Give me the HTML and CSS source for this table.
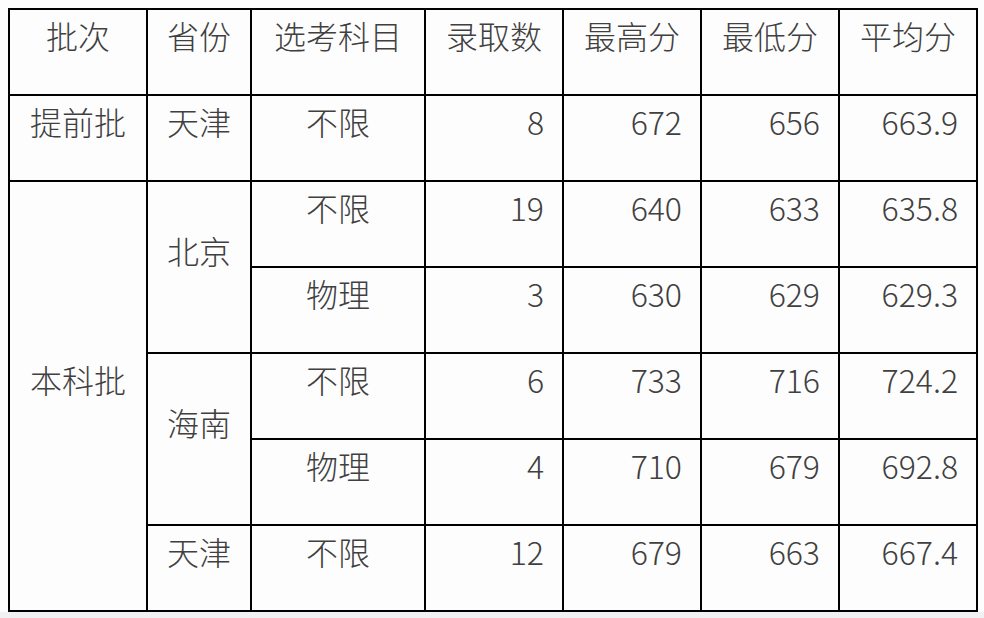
FILE: index.html
```html
<!DOCTYPE html>
<html lang="zh-CN">
<head>
<meta charset="utf-8">
<title>录取分数</title>
<link rel="stylesheet" href="styles.css">
</head>
<body>
<div class="page">
  <table class="score-table">
    <colgroup>
      <col class="c-batch">
      <col class="c-prov">
      <col class="c-subj">
      <col class="c-num">
      <col class="c-num">
      <col class="c-num">
      <col class="c-num">
    </colgroup>
    <thead>
      <tr>
        <th>批次</th>
        <th>省份</th>
        <th>选考科目</th>
        <th>录取数</th>
        <th>最高分</th>
        <th>最低分</th>
        <th>平均分</th>
      </tr>
    </thead>
    <tbody>
      <tr>
        <td class="ctr">提前批</td>
        <td class="ctr">天津</td>
        <td class="ctr">不限</td>
        <td class="num">8</td>
        <td class="num">672</td>
        <td class="num">656</td>
        <td class="num">663.9</td>
      </tr>
      <tr>
        <td class="ctr" rowspan="5">本科批</td>
        <td class="ctr" rowspan="2">北京</td>
        <td class="ctr">不限</td>
        <td class="num">19</td>
        <td class="num">640</td>
        <td class="num">633</td>
        <td class="num">635.8</td>
      </tr>
      <tr>
        <td class="ctr">物理</td>
        <td class="num">3</td>
        <td class="num">630</td>
        <td class="num">629</td>
        <td class="num">629.3</td>
      </tr>
      <tr>
        <td class="ctr" rowspan="2">海南</td>
        <td class="ctr">不限</td>
        <td class="num">6</td>
        <td class="num">733</td>
        <td class="num">716</td>
        <td class="num">724.2</td>
      </tr>
      <tr>
        <td class="ctr">物理</td>
        <td class="num">4</td>
        <td class="num">710</td>
        <td class="num">679</td>
        <td class="num">692.8</td>
      </tr>
      <tr>
        <td class="ctr">天津</td>
        <td class="ctr">不限</td>
        <td class="num">12</td>
        <td class="num">679</td>
        <td class="num">663</td>
        <td class="num">667.4</td>
      </tr>
    </tbody>
  </table>
</div>
</body>
</html>
```
FILE: styles.css
```css
html, body {
  margin: 0;
  padding: 0;
}
body {
  background: #f1f1f3;
  font-family: "Noto Sans CJK SC", "Noto Sans", sans-serif;
}
.page {
  background: #fefdfe;
  height: 612px;
  padding: 8px 0 0 8px;
  box-sizing: border-box;
}
.score-table {
  border-collapse: collapse;
  table-layout: fixed;
  width: 970px;
  color: #404040;
  font-size: 32px;
  font-weight: 300;
}
.c-batch { width: 138px; }
.c-prov { width: 104px; }
.c-subj { width: 174px; }
.c-num { width: 138px; }
.score-table th,
.score-table td {
  border: 2px solid #000;
  height: 86px;
  box-sizing: border-box;
  padding: 0 0 33px 0;
  vertical-align: middle;
  line-height: 1.2;
  font-weight: 300;
  white-space: nowrap;
}
.score-table th,
.score-table .ctr {
  text-align: center;
}
.score-table .num {
  text-align: right;
  padding-right: 18px;
}
```
